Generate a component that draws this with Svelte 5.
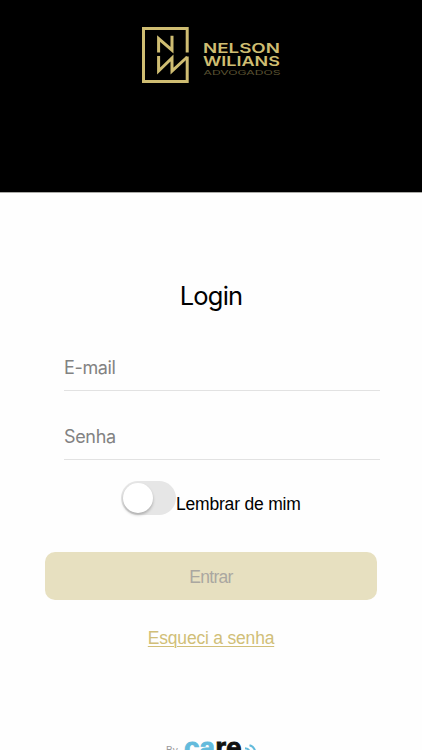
<script lang="ts">
	let email = $state('');
	let password = $state('');
	let remember = $state(false);

	const canSubmit = $derived(email !== '' && password !== '');
</script>

<div class="screen">
	<header class="brand">
		<svg class="brand-logo" viewBox="0 0 140 58" role="img" aria-label="Nelson Wilians Advogados">
			<g fill="none" stroke="#cfbd72" stroke-width="3">
				<path d="M46.2 26.5V2.5H2.5V55.5H46.2V30.5" />
				<path d="M17.6 26.5V12.5L31 24.2V9.8" />
				<path d="M17.6 30V45L31 32V45L46.2 31" />
			</g>
			<g class="brand-name">
				<text x="62" y="26.6" textLength="77" lengthAdjust="spacingAndGlyphs">NELSON</text>
				<text x="62" y="40" textLength="77" lengthAdjust="spacingAndGlyphs">WILIANS</text>
			</g>
			<text class="brand-sub" x="62.5" y="48.7" textLength="77" lengthAdjust="spacingAndGlyphs"
				>ADVOGADOS</text
			>
		</svg>
	</header>

	<main>
		<h1>Login</h1>

		<form onsubmit={(e) => e.preventDefault()}>
			<div class="fields">
				<input type="email" placeholder="E-mail" aria-label="E-mail" bind:value={email} />
				<input type="password" placeholder="Senha" aria-label="Senha" bind:value={password} />
			</div>

			<label class="remember">
				<input class="sr-only" type="checkbox" bind:checked={remember} />
				<span class="switch" class:on={remember}><span class="knob"></span></span>
				<span class="remember-text">Lembrar de mim</span>
			</label>

			<button type="submit" disabled={!canSubmit}>Entrar</button>
		</form>

		<a class="forgot" href="#senha">Esqueci a senha</a>
	</main>

	<footer>
		<span class="by">By</span>
		<span class="care"><span class="care-blue">ca</span>re</span>
		<svg class="waves" viewBox="0 0 14 14" aria-hidden="true">
			<path d="M1 4.2Q5 4.5 6.2 8.5" />
			<path d="M5.5 1.2Q10.5 2.5 11.5 8.5" />
		</svg>
	</footer>
</div>

<style>
	:global(body) {
		margin: 0;
		background: #fff;
		overflow: hidden;
	}

	.screen {
		display: flex;
		flex-direction: column;
		height: 750px;
		overflow: hidden;
		font-family: 'Liberation Sans', Arial, sans-serif;
		background: #fefefe;
	}

	.brand {
		box-sizing: border-box;
		flex: none;
		display: flex;
		justify-content: center;
		height: 193px;
		padding-top: 26px;
		background: #000;
		border-bottom: 1px solid #aaaaa6;
	}

	.brand-logo {
		width: 140px;
		height: 58px;
		overflow: visible;
	}

	.brand-name {
		font: 600 13px Inter, sans-serif;
		fill: #cfbd72;
	}

	.brand-sub {
		font: 400 6.8px Inter, sans-serif;
		fill: #5c5433;
	}

	main {
		flex: none;
		display: flex;
		flex-direction: column;
		align-items: center;
		height: 547px;
	}

	h1 {
		margin: 88px 0 0;
		font: 400 25.5px/30px Inter, sans-serif;
		letter-spacing: -0.8px;
		color: #000;
	}

	form {
		display: flex;
		flex-direction: column;
		width: 332px;
		margin-top: 32px;
	}

	.fields {
		display: flex;
		flex-direction: column;
		gap: 21px;
		width: 316px;
		margin-left: 19px;
	}

	.fields input {
		box-sizing: border-box;
		width: 100%;
		height: 48px;
		padding: 2px 0 0;
		border: 0;
		border-bottom: 1px solid #e2e2e2;
		border-radius: 0;
		outline: none;
		background: transparent;
		font: 400 18px Inter, sans-serif;
		letter-spacing: -0.35px;
		color: #222;
	}

	.fields input::placeholder {
		color: #828282;
		opacity: 1;
	}

	.remember {
		position: relative;
		display: flex;
		align-items: center;
		height: 36px;
		margin: 20px 0 0 76px;
		cursor: pointer;
	}

	.switch {
		box-sizing: border-box;
		width: 55px;
		height: 34px;
		margin-bottom: 1px;
		padding: 2px;
		border-radius: 17px;
		background: #e6e6e6;
	}

	.switch.on {
		background: #cfbd72;
	}

	.knob {
		display: block;
		width: 30px;
		height: 30px;
		border-radius: 50%;
		background: #fff;
		box-shadow: 0 2px 3px rgba(0, 0, 0, 0.25);
	}

	.on .knob {
		margin-left: 21px;
	}

	.remember-text {
		padding-top: 11px;
		font-size: 17.5px;
		line-height: 20px;
		letter-spacing: -0.2px;
		color: #000;
	}

	button {
		height: 48px;
		margin-top: 36px;
		padding: 2px 0 0;
		border: 0;
		border-radius: 10px;
		background: #cfbd72;
		font: 400 17.5px 'Liberation Sans', Arial, sans-serif;
		letter-spacing: -0.7px;
		color: #222;
	}

	button:disabled {
		background: #e7e0c0;
		color: #aaa7a0;
	}

	.forgot {
		margin-top: 28px;
		font-size: 17.5px;
		line-height: 20px;
		letter-spacing: -0.2px;
		color: #d1bf78;
		text-underline-offset: 2px;
		text-decoration-thickness: 1px;
	}

	footer {
		flex: none;
		display: flex;
		align-items: flex-start;
		height: 10px;
		padding-left: 166px;
		overflow: hidden;
	}

	.by {
		width: 18px;
		margin-top: 5px;
		font-size: 10px;
		line-height: 12px;
		color: #999;
	}

	.care {
		width: 57px;
		margin-top: -7px;
		font-size: 28px;
		font-weight: 700;
		line-height: 30px;
		color: #111;
		-webkit-text-stroke: 0.8px currentColor;
	}

	.care-blue {
		color: #63bbdc;
	}

	.waves {
		width: 14px;
		height: 14px;
		margin: 4px 0 0 3px;
		fill: none;
		stroke: #63bbdc;
		stroke-width: 2;
	}

	.sr-only {
		position: absolute;
		width: 1px;
		height: 1px;
		margin: -1px;
		overflow: hidden;
		clip-path: inset(50%);
	}
</style>
